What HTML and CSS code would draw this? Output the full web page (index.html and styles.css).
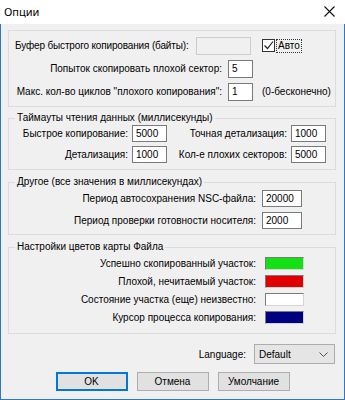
FILE: index.html
```html
<!DOCTYPE html>
<html lang="ru">
<head>
<meta charset="utf-8">
<title>Опции</title>
<link rel="stylesheet" href="styles.css">
</head>
<body>
<div class="win">
  <div class="titlebar">
    <span class="title">Опции</span>
    <svg class="close" width="11" height="11" viewBox="0 0 11 11"><path d="M0.5 0.5 L10.5 10.5 M10.5 0.5 L0.5 10.5" stroke="#111" stroke-width="1.1" fill="none"/></svg>
  </div>
  <div class="client">
    <div class="group g1">
      <div class="row">
        <span class="lbl lbl-buf">Буфер быстрого копирования (байты):</span>
        <span class="edit disabled w55"></span>
        <span class="check"><svg width="11" height="11" viewBox="0 0 11 11"><path d="M1.5 5.5 L4.5 8.5 L10 1.5" stroke="#222" stroke-width="1.2" fill="none"/></svg></span>
        <span class="focus">Авто</span>
      </div>
      <div class="row">
        <span class="lbl lbl-r1">Попыток скопировать плохой сектор:</span>
        <span class="edit w25">5</span>
      </div>
      <div class="row">
        <span class="lbl lbl-r1">Макс. кол-во циклов "плохого копирования":</span>
        <span class="edit w25">1</span>
        <span class="note">(0-бесконечно)</span>
      </div>
    </div>

    <div class="group g2">
      <div class="legend">Таймауты чтения данных (миллисекунды)</div>
      <div class="grid2">
        <span class="lbl">Быстрое копирование:</span><span class="edit">5000</span>
        <span class="lbl">Точная детализация:</span><span class="edit">1000</span>
        <span class="lbl">Детализация:</span><span class="edit">1000</span>
        <span class="lbl">Кол-е плохих секторов:</span><span class="edit">5000</span>
      </div>
    </div>

    <div class="group g3">
      <div class="legend">Другое (все значения в миллисекундах)</div>
      <div class="grid3">
        <span class="lbl">Период автосохранения NSC-файла:</span><span class="edit">20000</span>
        <span class="lbl">Период проверки готовности носителя:</span><span class="edit">2000</span>
      </div>
    </div>

    <div class="group g4">
      <div class="legend">Настройки цветов карты Файла</div>
      <div class="grid4">
        <span class="lbl">Успешно скопированный участок:</span><span class="swatch green"></span>
        <span class="lbl">Плохой, нечитаемый участок:</span><span class="swatch red"></span>
        <span class="lbl">Состояние участка (еще) неизвестно:</span><span class="swatch white"></span>
        <span class="lbl">Курсор процесса копирования:</span><span class="swatch navy"></span>
      </div>
    </div>

    <div class="lang-row">
      <span class="lang-lbl">Language:</span>
      <span class="combo"><span>Default</span><svg width="9" height="5" viewBox="0 0 9 5"><path d="M0.5 0.5 L4.5 4.5 L8.5 0.5" stroke="#555" stroke-width="1" fill="none"/></svg></span>
    </div>

    <div class="buttons">
      <span class="btn default">OK</span>
      <span class="btn">Отмена</span>
      <span class="btn">Умолчание</span>
    </div>
  </div>
</div>
</body>
</html>
```

FILE: styles.css
```css
* { box-sizing: border-box; }
html, body { margin: 0; padding: 0; background: #f0f0f0; }
body {
  font-family: "Liberation Sans", Arial, sans-serif;
  font-size: 10px;
  color: #000;
}
.win {
  width: 345px;
  height: 400px;
  display: flex;
  flex-direction: column;
  background: #f0f0f0;
}
.titlebar {
  height: 24px;
  flex: none;
  background: #fff;
  display: flex;
  align-items: center;
  justify-content: space-between;
  padding: 0 10px 2px 4px;
}
.title {
  font-family: "Noto Sans", "Open Sans", sans-serif;
  font-size: 11px;
}
.close { display: block; }
.client {
  flex: 1;
  border: 1px solid #2b79c4;
  border-top: none;
  padding: 6px 0 0 7px;
  display: flex;
  flex-direction: column;
}
.group {
  width: 328px;
  border: 1px solid #dcdcdc;
  flex: none;
}
.legend {
  width: fit-content;
  margin: -7px 0 0 6px;
  padding: 0 2px;
  line-height: 12px;
  height: 12px;
  background: #f0f0f0;
  white-space: nowrap;
}
.g1 { height: 77px; padding-top: 3px; }
.g2 { height: 52px; margin-top: 11px; }
.g3 { height: 53px; margin-top: 12px; }
.g4 { height: 87px; margin-top: 12px; }

.row { height: 23px; display: flex; align-items: center; }
.lbl { white-space: nowrap; }
.lbl-buf { width: 187px; padding-left: 6px; letter-spacing: -0.15px; }
.lbl-r1 { width: 219px; text-align: right; padding-right: 6px; }
.edit {
  display: flex;
  align-items: center;
  height: 18px;
  background: #fff;
  border: 1px solid #7a7a7a;
  padding-left: 3px;
  flex: none;
}
.edit.disabled { background: #f0f0f0; border-color: #cccccc; }
.w55 { width: 55px; }
.w25 { width: 25px; }
.check {
  margin-left: 11px;
  width: 13px;
  height: 13px;
  border: 1px solid #333;
  background: #fff;
  display: flex;
  align-items: center;
  justify-content: center;
}
.focus {
  margin-left: 1px;
  padding: 0 1px;
  border: 1px dotted #333;
  line-height: 12px;
}
.note { margin-left: 9px; white-space: nowrap; }

.grid2 {
  display: grid;
  grid-template-columns: 123px 35px 124px 35px;
  grid-auto-rows: 21px;
  align-items: center;
  margin-top: -1px;
}
.grid2 .lbl, .grid3 .lbl, .grid4 .lbl { text-align: right; }
.grid2 .lbl { padding-right: 4px; }
.grid2 .edit { height: 17px; }
.grid3 {
  display: grid;
  grid-template-columns: 253px 40px;
  grid-auto-rows: 22px;
  align-items: center;
  margin-top: -1px;
}
.grid3 .lbl { padding-right: 6px; }
.grid3 .edit { height: 17px; }
.grid4 {
  display: grid;
  grid-template-columns: 256px 39px;
  grid-auto-rows: 18px;
  align-items: center;
  margin-top: 1px;
}
.grid4 .lbl { padding-right: 9px; }
.swatch {
  height: 13px;
  border: 1px solid #7a7a7a;
  border-right-color: #d4d4d4;
  border-bottom-color: #d4d4d4;
}
.green { background: #14e014; }
.red { background: #e00000; }
.white { background: #fff; }
.navy { background: #000080; }

.lang-row {
  display: flex;
  justify-content: flex-end;
  align-items: center;
  margin-top: 10px;
  padding-right: 9px;
}
.lang-lbl { margin-right: 8px; }
.combo {
  width: 81px;
  height: 20px;
  background: #e5e5e5;
  border: 1px solid #adadad;
  display: flex;
  align-items: center;
  justify-content: space-between;
  padding: 0 6px 0 4px;
}
.buttons {
  display: flex;
  justify-content: center;
  gap: 9px;
  margin-top: 8px;
  margin-left: -7px;
}
.btn {
  width: 72px;
  height: 19px;
  background: #e1e1e1;
  border: 1px solid #adadad;
  display: flex;
  align-items: center;
  justify-content: center;
}
.btn.default {
  border-color: #0078d7;
  box-shadow: inset 0 0 0 1px #0078d7;
}
```
